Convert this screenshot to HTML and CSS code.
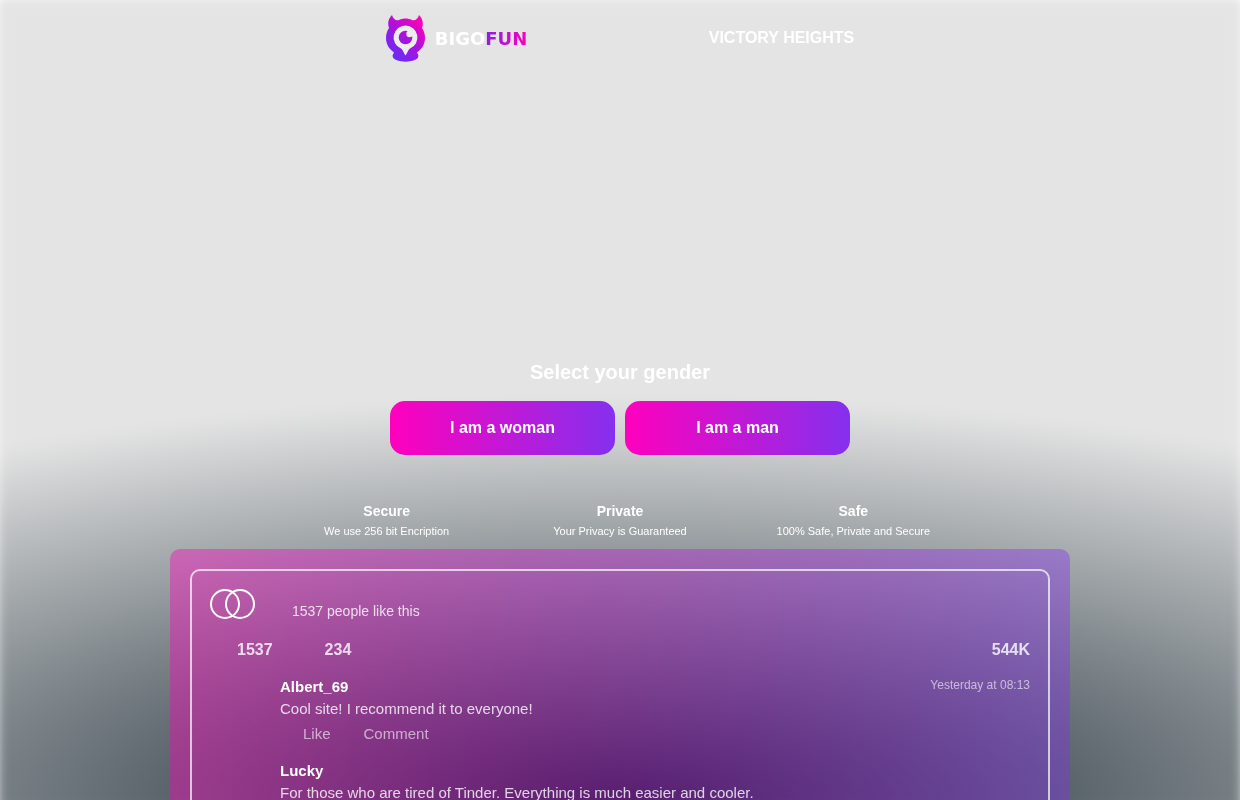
FILE: index.html
```html
<!DOCTYPE html>
<html lang="en">
<head>
    <meta charset="UTF-8">
    <meta name="viewport" content="width=device-width, initial-scale=1.0">
    <title>BigoFun</title>
    <link rel="stylesheet" href="styles.css">
</head>
<body>

    <div class="background"></div>

    <header class="header">
        <a class="logo" href="#">
            <svg class="logo-icon" viewBox="0 0 39 48" aria-hidden="true">
                <defs>
                    <linearGradient id="logo-gradient" gradientUnits="userSpaceOnUse" x1="5" y1="40" x2="34" y2="8">
                        <stop offset="0" stop-color="#6a2cf5"/>
                        <stop offset="0.5" stop-color="#a812df"/>
                        <stop offset="1" stop-color="#fb00bd"/>
                    </linearGradient>
                </defs>
                <path fill="url(#logo-gradient)" d="M3 14C1 8 3 4 6 1C7 5 10 7 13 6C17 4 22 4 26 6C29 7 32 5 33 1C36 4 38 8 36 14C38 17 39 20 39 24C39 30 36 35 31 38.500C32 41 33 41 32 43.500C29 49 10 49 7 43.500C6 41 7 41 8 38.500C3 35 0 30 0 24C0 20 1 17 3 14Z"/>
                <path fill="#ededed" d="M19.500 11.500A12 12 0 0 0 15 34.600C17 36 17.500 39 19.500 41.500C21.500 39 22 36 24 34.600A12 12 0 0 0 19.500 11.500Z"/>
                <circle fill="url(#logo-gradient)" cx="19.500" cy="23.500" r="6.800"/>
                <circle fill="#ededed" cx="23.500" cy="20" r="3.200"/>
            </svg>
            <span class="logo-text">BIGO<span class="logo-accent">FUN</span></span>
        </a>
        <div class="city">VICTORY HEIGHTS</div>
    </header>

    <main>
        <section class="gender">
            <h1>Select your gender</h1>
            <div class="buttons">
                <button type="button">I am a woman</button>
                <button type="button">I am a man</button>
            </div>
        </section>

        <section class="features">
            <div class="feature">
                <h2>Secure</h2>
                <p>We use 256 bit Encription</p>
            </div>
            <div class="feature">
                <h2>Private</h2>
                <p>Your Privacy is Guaranteed</p>
            </div>
            <div class="feature">
                <h2>Safe</h2>
                <p>100% Safe, Private and Secure</p>
            </div>
        </section>

        <section class="comments">
            <div class="comments-inner">
                <div class="likes">
                    <div class="avatars">
                        <span class="avatar"></span>
                        <span class="avatar"></span>
                    </div>
                    <p>1537 people like this</p>
                </div>
                <div class="stats">
                    <span>1537</span>
                    <span>234</span>
                    <span class="views">544K</span>
                </div>
                <article class="comment">
                    <div class="comment-head">
                        <h3>Albert_69</h3>
                        <time>Yesterday at 08:13</time>
                    </div>
                    <p>Cool site! I recommend it to everyone!</p>
                    <div class="actions">
                        <a href="#">Like</a>
                        <a href="#">Comment</a>
                    </div>
                </article>
                <article class="comment">
                    <div class="comment-head">
                        <h3>Lucky</h3>
                    </div>
                    <p>For those who are tired of Tinder. Everything is much easier and cooler.</p>
                </article>
            </div>
        </section>
    </main>

</body>
</html>
```

FILE: styles.css
```css
* {
    box-sizing: border-box;
    margin: 0;
    padding: 0;
}

html {
    scrollbar-width: none;
}

body {
    font-family: "Liberation Sans", Arial, sans-serif;
    color: #fff;
    background: #fff;
}

a {
    color: inherit;
    text-decoration: none;
}

/* Blurred backdrop behind the whole page */
.background {
    position: fixed;
    inset: -3px -3px -12px;
    z-index: -1;
    background: radial-gradient(103% 50% at 50% 99%, #10202a, #e4e4e4);
    filter: blur(6px);
}

/* Header */
.header {
    display: flex;
    justify-content: space-around;
    align-items: center;
    max-width: 650px;
    height: 76px;
    margin: 0 auto;
}

.logo {
    display: flex;
    align-items: center;
    gap: 10px;
}

.logo-icon {
    width: 39px;
    height: 48px;
}

.logo-text {
    font-family: "DejaVu Sans", sans-serif;
    font-size: 18px;
    font-weight: 700;
}

.logo-accent {
    background: linear-gradient(90deg, #8a1fe6, #fb00bd);
    -webkit-background-clip: text;
    background-clip: text;
    color: transparent;
}

.city {
    font-size: 16px;
    font-weight: 700;
}

/* Gender select */
.gender {
    max-width: 460px;
    margin: 0 auto;
    padding-top: 284px;
    text-align: center;
}

.gender h1 {
    font-size: 20px;
    line-height: 24px;
}

.buttons {
    display: flex;
    gap: 10px;
    margin-top: 17px;
}

button {
    flex: 1;
    height: 54px;
    border: none;
    border-radius: 15px;
    background: linear-gradient(90deg, #ff00bd, #8430ee);
    color: #fff;
    font-family: inherit;
    font-size: 16px;
    font-weight: 700;
    cursor: pointer;
}

/* Features */
.features {
    display: grid;
    grid-template-columns: repeat(3, 1fr);
    max-width: 700px;
    margin: 46px auto 0;
    text-align: center;
}

.feature h2 {
    font-size: 14px;
    line-height: 20px;
}

.feature p {
    font-size: 11px;
    line-height: 20px;
}

/* Comments */
.comments {
    max-width: 900px;
    margin: 8px auto 0;
    padding: 20px;
    border-radius: 10px;
    background: linear-gradient(90deg, rgba(255, 0, 189, 0.4), rgba(132, 48, 238, 0.4));
}

.comments-inner {
    padding: 18px;
    border: 2px solid rgba(255, 255, 255, 0.7);
    border-radius: 10px;
}

.likes {
    display: flex;
    gap: 37px;
}

.likes p {
    padding-top: 12px;
    font-size: 14px;
    line-height: 20px;
    color: rgba(255, 255, 255, 0.8);
}

.avatars {
    display: flex;
}

.avatar {
    width: 30px;
    height: 30px;
    border: 2px solid #fff;
    border-radius: 50%;
}

.avatar + .avatar {
    margin-left: -15px;
}

.stats {
    display: flex;
    gap: 52px;
    margin-top: 19px;
    padding-left: 27px;
    font-size: 16px;
    font-weight: 700;
    line-height: 20px;
    color: rgba(255, 255, 255, 0.8);
}

.views {
    margin-left: auto;
}

.comment {
    margin-top: 17px;
    padding-left: 70px;
    font-size: 15px;
    line-height: 20px;
}

.comment-head {
    display: flex;
    justify-content: space-between;
}

.comment-head h3 {
    font-size: 15px;
}

.comment-head time {
    font-size: 12px;
    line-height: 16px;
    color: rgba(255, 255, 255, 0.6);
}

.comment p {
    margin-top: 2px;
    color: rgba(255, 255, 255, 0.8);
}

.actions {
    display: flex;
    gap: 33px;
    margin-top: 5px;
    padding-left: 23px;
    color: rgba(255, 255, 255, 0.6);
}
```
